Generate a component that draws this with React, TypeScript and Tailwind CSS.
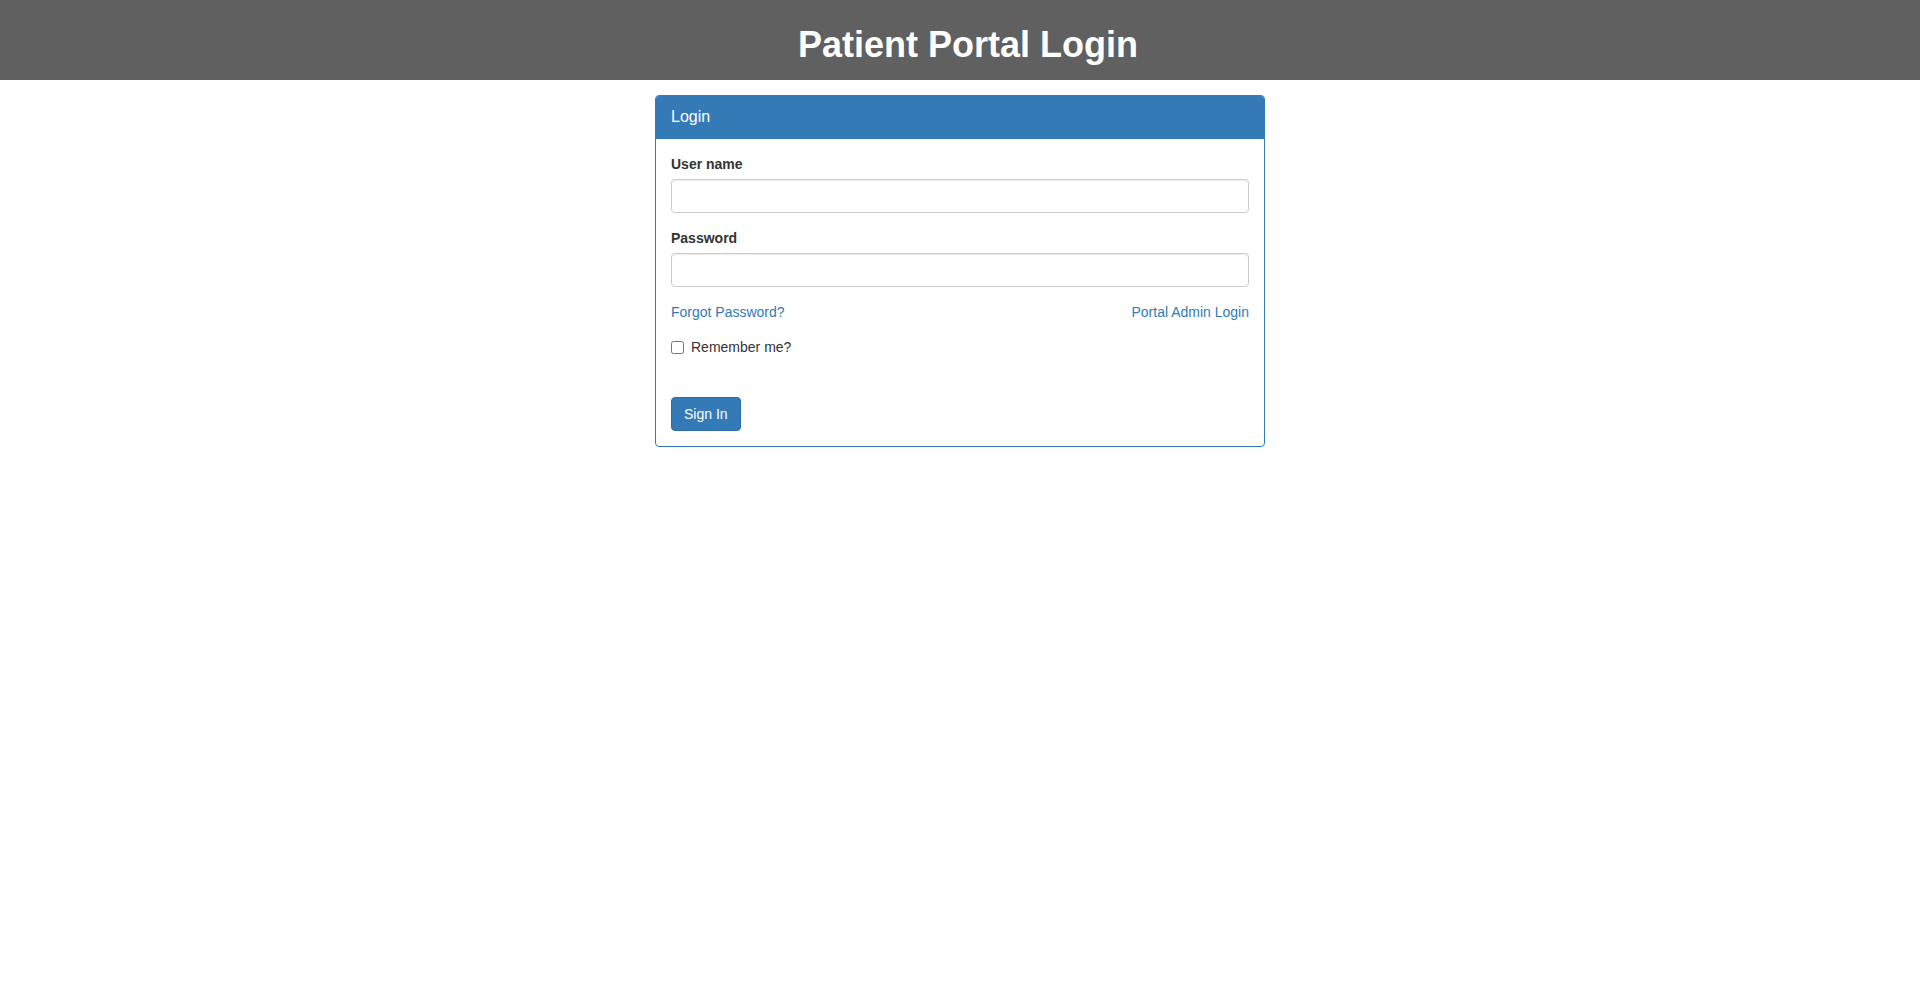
export default function App() {
  return (
    <div className="min-h-screen bg-white font-['Liberation_Sans',Arial,sans-serif] text-[14px] leading-[20px] text-[#333]">
      <header className="bg-[#606060] py-[5px] pl-4 text-center">
        <h1 className="mt-5 mb-[10px] text-[36px] font-bold leading-[1.1] text-white">Patient Portal Login</h1>
      </header>

      <div className="mx-auto mt-[15px] w-[610px] rounded-[4px] border border-[#337ab7] bg-white">
        <div className="rounded-t-[3px] border-b border-[#337ab7] bg-[#337ab7] px-[15px] py-[10px] text-[16px] leading-[22.8px] text-white">
          Login
        </div>
        <form className="p-[15px]" onSubmit={(e) => e.preventDefault()}>
          <div className="mb-[15px]">
            <label className="mb-[5px] block font-bold">User name</label>
            <input
              type="text"
              className="block h-[34px] w-full rounded-[4px] border border-[#ccc] px-3 py-1.5 shadow-[inset_0_1px_1px_rgba(0,0,0,0.075)] outline-none"
            />
          </div>
          <div className="mb-[15px]">
            <label className="mb-[5px] block font-bold">Password</label>
            <input
              type="password"
              className="block h-[34px] w-full rounded-[4px] border border-[#ccc] px-3 py-1.5 shadow-[inset_0_1px_1px_rgba(0,0,0,0.075)] outline-none"
            />
          </div>
          <div className="mb-[15px] flex justify-between">
            <a href="#" className="text-[#337ab7]">Forgot Password?</a>
            <a href="#" className="text-[#337ab7]">Portal Admin Login</a>
          </div>
          <div className="flex items-center">
            <label className="flex items-center gap-[7px]">
              <input type="checkbox" className="m-0 h-[13px] w-[13px]" />
              <span>Remember me?</span>
            </label>
          </div>
          <div className="mt-[40px]">
            <button
              type="submit"
              className="h-[34px] rounded-[4px] border border-[#2e6da4] bg-[#337ab7] px-3 text-white"
            >
              Sign In
            </button>
          </div>
        </form>
      </div>
    </div>
  );
}
